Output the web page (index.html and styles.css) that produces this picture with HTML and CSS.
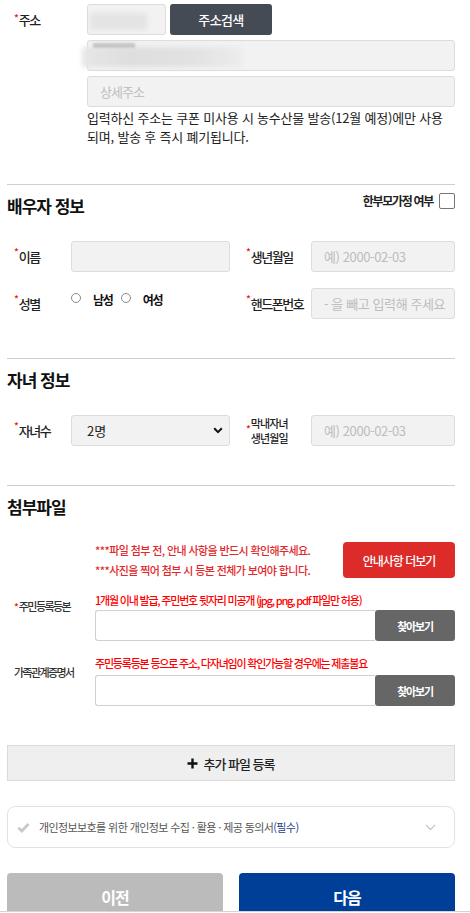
FILE: index.html
```html
<!DOCTYPE html>
<html lang="ko">
<head>
<meta charset="utf-8">
<title>신청서</title>
<link rel="stylesheet" href="styles.css">
</head>
<body>
<div class="page">
  <section class="addr">
    <div class="label"><span class="req">*</span>주소</div>
    <div class="addr-fields">
      <div class="zip-row">
        <div class="field zip"><span class="blur b1"></span></div>
        <button class="btn-dark" type="button">주소검색</button>
      </div>
      <div class="field full"><span class="blur b2"></span><span class="blur b3"></span></div>
      <div class="field full ph">상세주소</div>
      <p class="note"><span>입력하신 주소는 쿠폰 미사용 시 농수산물 발송(12월 예정)에만 사용</span><span>되며, 발송 후 즉시 폐기됩니다.</span></p>
    </div>
  </section>

  <div class="divider d1"></div>

  <div class="sec-head">
    <h2>배우자 정보</h2>
    <label class="single">한부모가정 여부<span class="chk"></span></label>
  </div>
  <div class="grid">
    <div class="label"><span class="req">*</span>이름</div>
    <div class="field"></div>
    <div class="label r"><span class="req">*</span>생년월일</div>
    <div class="field ph">예) 2000-02-03</div>

    <div class="label"><span class="req">*</span>성별</div>
    <div class="radios">
      <span class="radio"></span><span class="rtext">남성</span>
      <span class="radio"></span><span class="rtext">여성</span>
    </div>
    <div class="label r"><span class="req">*</span>핸드폰번호</div>
    <div class="field ph">- 을 빼고 입력해 주세요</div>
  </div>

  <div class="divider d2"></div>

  <div class="sec-head">
    <h2>자녀 정보</h2>
  </div>
  <div class="grid">
    <div class="label"><span class="req">*</span>자녀수</div>
    <div class="field select">2명
      <svg class="caret" width="10" height="7" viewBox="0 0 10 7"><path d="M1.2 1.3 L5 5.1 L8.8 1.3" fill="none" stroke="#111" stroke-width="2"/></svg>
    </div>
    <div class="label r two"><span class="req">*</span><span class="ltext"><span>막내자녀</span><span>생년월일</span></span></div>
    <div class="field ph">예) 2000-02-03</div>
  </div>

  <div class="divider d2"></div>

  <div class="sec-head">
    <h2>첨부파일</h2>
  </div>

  <div class="guide">
    <div class="guide-text">
      <div>***파일 첨부 전, 안내 사항을 반드시 확인해주세요.</div>
      <div>***사진을 찍어 첨부 시 등본 전체가 보여야 합니다.</div>
    </div>
    <button class="btn-red" type="button">안내사항 더보기</button>
  </div>

  <div class="file f1">
    <div class="flabel"><span class="req">*</span>주민등록등본</div>
    <div class="fbody">
      <div class="fnote">1개월 이내 발급, 주민번호 뒷자리 미공개 (jpg, png, pdf 파일만 허용)</div>
      <div class="frow"><div class="finput"></div><button class="btn-find" type="button">찾아보기</button></div>
    </div>
  </div>

  <div class="file f2">
    <div class="flabel">가족관계증명서</div>
    <div class="fbody">
      <div class="fnote">주민등록등본 등으로 주소, 다자녀임이 확인가능할 경우에는 제출불요</div>
      <div class="frow"><div class="finput"></div><button class="btn-find" type="button">찾아보기</button></div>
    </div>
  </div>

  <div class="addfile">
    <svg width="11" height="11" viewBox="0 0 11 11"><path d="M5.5 0.5 V10.5 M0.5 5.5 H10.5" stroke="#111" stroke-width="2.4"/></svg>
    <span>추가 파일 등록</span>
  </div>

  <div class="consent">
    <svg class="check" width="13" height="11" viewBox="0 0 13 11"><path d="M1.5 5.8 L4.8 9 L11.5 2" fill="none" stroke="#c9c9c9" stroke-width="2.8"/></svg>
    <span class="ctext">개인정보보호를 위한 개인정보 수집 · 활용 · 제공 동의서<em>(필수)</em></span>
    <svg class="chev" width="11" height="7" viewBox="0 0 11 7"><path d="M1 1 L5.5 5.5 L10 1" fill="none" stroke="#c8c8c8" stroke-width="1.3"/></svg>
  </div>

  <div class="nav">
    <button class="btn-prev" type="button">이전</button>
    <button class="btn-next" type="button">다음</button>
  </div>
</div>
<div class="bottom-line"></div>
</body>
</html>
```

FILE: styles.css
```css
html, body {
  margin: 0;
  padding: 0;
  overflow: hidden;
  background: #fff;
}
body {
  font-family: "Noto Sans CJK KR", "Noto Sans", sans-serif;
  color: #222;
}
button {
  font-family: inherit;
  border: 0;
  padding: 0;
  cursor: pointer;
}
.page {
  width: 448px;
  margin-left: 7px;
  padding-top: 4px;
}
.req {
  color: #e8141c;
  font-size: 10px;
  line-height: 1;
  align-self: flex-start;
  margin-top: 6px;
  margin-right: 0;
  letter-spacing: 0;
}
.label {
  display: flex;
  align-items: center;
  padding-left: 7px;
  font-size: 13px;
  font-weight: 500;
  letter-spacing: -1.5px;
  color: #222;
}

/* address */
.addr {
  display: flex;
}
.addr .label {
  width: 73px;
  height: 31px;
  align-items: center;
}
.addr .label .req {
  margin-top: 9px;
}
.addr-fields {
  width: 368px;
}
.zip-row {
  display: flex;
  gap: 4px;
}
.field {
  position: relative;
  box-sizing: border-box;
  height: 31px;
  border: 1px solid #dcdcdc;
  border-radius: 3px;
  background: #f2f2f2;
}
.zip {
  width: 79px;
}
.btn-dark {
  width: 102px;
  height: 31px;
  border-radius: 3px;
  background: #454b54;
  color: #fff;
  font-size: 13px;
  font-weight: 500;
  letter-spacing: -0.6px;
}
.full {
  margin-top: 5px;
}
.ph {
  padding-left: 12px;
  font-size: 13px;
  line-height: 29px;
  color: #bdbdbd;
  letter-spacing: -0.4px;
  white-space: nowrap;
  overflow: hidden;
}
.addr .ph {
  letter-spacing: -1px;
}
.blur {
  position: absolute;
  display: block;
}
.b1 {
  left: 2px;
  top: 8px;
  width: 57px;
  height: 17px;
  background: #e4e4e4;
  filter: blur(2px);
}
.b2 {
  left: -6px;
  top: 6px;
  width: 160px;
  height: 20px;
  background: linear-gradient(90deg, #e6e6e6, #dedede 30%, #e2e2e2 70%, #ececec);
  filter: blur(2.5px);
}
.b3 {
  left: 5px;
  top: 2px;
  width: 42px;
  height: 5px;
  background: #c6c6c6;
  filter: blur(1px);
}
.note {
  margin: 1px 0 0;
  font-size: 13px;
  line-height: 19px;
  letter-spacing: -0.2px;
  color: #222;
}
.note span {
  display: block;
  white-space: nowrap;
}

/* dividers & headings */
.divider {
  height: 1px;
  background: #cfcfcf;
}
.d1 {
  margin-top: 38px;
}
.d2 {
  margin-top: 39px;
}
.sec-head {
  display: flex;
  justify-content: space-between;
  align-items: flex-start;
  padding-top: 8px;
}
.sec-head h2 {
  margin: 0;
  font-size: 17px;
  line-height: 26px;
  font-weight: 700;
  letter-spacing: -1px;
  color: #111;
}
.single {
  display: flex;
  align-items: center;
  gap: 6px;
  font-size: 12px;
  line-height: 16px;
  font-weight: 700;
  letter-spacing: -1.3px;
  color: #222;
}
.chk {
  display: block;
  box-sizing: border-box;
  width: 16px;
  height: 16px;
  border: 1px solid #767676;
  border-radius: 2px;
  background: #fff;
}

/* grid rows */
.grid {
  display: grid;
  grid-template-columns: 64px 159px 81px 144px;
  grid-auto-rows: 31px;
  row-gap: 16px;
  margin-top: 22px;
}
.label.r {
  padding-left: 16px;
}
.radios {
  display: flex;
  align-items: center;
  align-self: start;
  height: 22px;
  font-size: 12px;
  font-weight: 700;
  letter-spacing: -1.2px;
  color: #111;
}
.radio {
  box-sizing: border-box;
  width: 10px;
  height: 10px;
  border: 1px solid #8a8a8a;
  border-radius: 50%;
  margin-right: 12px;
  margin-top: -3px;
}
.rtext {
  margin-right: 8px;
}
.select {
  display: flex;
  align-items: center;
  padding-left: 15px;
  font-size: 13px;
  color: #222;
}
.caret {
  margin-left: auto;
  margin-right: 6px;
}
.label.two {
  align-items: center;
}
.label.two .req {
  align-self: center;
  margin-top: -3px;
}
.ltext {
  display: flex;
  flex-direction: column;
}
.ltext span {
  display: block;
  height: 16px;
  line-height: 16px;
  font-size: 11px;
  letter-spacing: -0.9px;
  margin-top: -1px;
}
.ltext span + span {
  margin-top: -1px;
}

/* attachments */
.guide {
  display: flex;
  align-items: center;
  margin-top: 20px;
  padding-left: 88px;
}
.guide-text {
  font-size: 11px;
  line-height: 20px;
  font-weight: 500;
  letter-spacing: -0.6px;
  color: #e2282a;
  white-space: nowrap;
}
.btn-red {
  margin-left: auto;
  width: 112px;
  height: 36px;
  border-radius: 4px;
  background: #dc2b28;
  color: #fff;
  font-size: 12px;
  font-weight: 500;
  letter-spacing: -1px;
}
.file {
  display: flex;
}
.f1 {
  margin-top: 11px;
}
.f2 {
  margin-top: 13px;
}
.flabel {
  box-sizing: border-box;
  width: 88px;
  padding-left: 7px;
  font-size: 11px;
  line-height: 18px;
  letter-spacing: -1.6px;
  color: #333;
  font-weight: 500;
  white-space: nowrap;
}
.f1 .flabel {
  margin-top: 6px;
}
.f1 .flabel .req {
  margin-top: 3px;
}
.f2 .flabel {
  margin-top: 9px;
}
.fbody {
  width: 360px;
}
.fnote {
  font-size: 11px;
  line-height: 18px;
  font-weight: 500;
  letter-spacing: -1.2px;
  color: #f00;
  white-space: nowrap;
}
.f1 .frow {
  margin-top: 1px;
}
.f2 .frow {
  margin-top: 3px;
}
.frow {
  display: flex;
  height: 31px;
}
.finput {
  box-sizing: border-box;
  width: 280px;
  height: 31px;
  border: 1px solid #cfcfd6;
  border-right: 0;
  border-radius: 3px 0 0 3px;
  background: #fff;
}
.btn-find {
  width: 80px;
  height: 31px;
  border-radius: 3px;
  background: #666;
  color: #fff;
  font-size: 11px;
  font-weight: 700;
  letter-spacing: -1.2px;
}
.addfile {
  box-sizing: border-box;
  display: flex;
  align-items: center;
  justify-content: center;
  gap: 5px;
  height: 36px;
  margin-top: 39px;
  border: 1px solid #dadada;
  background: #efefef;
  font-size: 13px;
  font-weight: 500;
  letter-spacing: -1px;
  color: #222;
}
.consent {
  box-sizing: border-box;
  display: flex;
  align-items: center;
  height: 42px;
  margin-top: 25px;
  padding-left: 9px;
  padding-right: 18px;
  border: 1px solid #e2e2e2;
  border-radius: 8px;
}
.check {
  margin-right: 9px;
}
.ctext {
  font-size: 11px;
  letter-spacing: -0.6px;
  color: #555;
  white-space: nowrap;
}
.ctext em {
  font-style: normal;
  color: #1f3f8c;
}
.chev {
  margin-left: auto;
}
.nav {
  display: flex;
  gap: 16px;
  margin-top: 25px;
}
.nav button {
  width: 216px;
  height: 40px;
  border-radius: 4px 4px 0 0;
  color: #fff;
  font-size: 16px;
  font-weight: 700;
  letter-spacing: -1px;
  padding-top: 8px;
}
.btn-prev {
  background: #bbbbbb;
}
.btn-next {
  background: #003f98;
}
.bottom-line {
  position: fixed;
  left: 0;
  right: 0;
  bottom: 0;
  height: 1px;
  background: #fff;
  border-top: 1px solid #d4d4d4;
}
```
